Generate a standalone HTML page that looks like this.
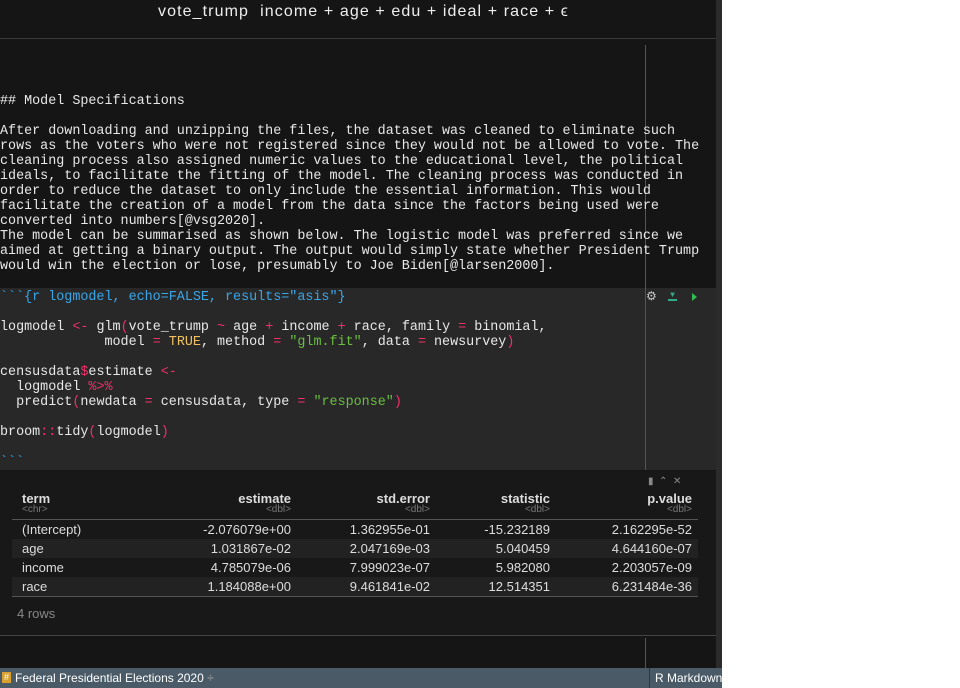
<!DOCTYPE html>
<html><head><style>
body{margin:0;width:960px;height:688px;background:#fff;position:relative;overflow:hidden;font-family:"Liberation Mono",monospace;}
#pane{position:absolute;left:0;top:0;width:716px;height:688px;background:#151515;}
#sb{position:absolute;left:716px;top:0;width:6px;height:668px;background:#2b2b2b;}
.m{position:absolute;left:0;font-size:13.4px;line-height:15px;color:#e8e8e8;white-space:pre;}
#chunk{position:absolute;left:0;top:288px;width:716px;height:182px;background:#282828;}
.vl{position:absolute;left:645px;width:1px;background:#555;}
.p{color:#f0306a}.b{color:#39a6e8}.g{color:#6abf40}.y{color:#f0c060}
#tbl{position:absolute;left:0;top:471px;width:716px;height:164px;background:#181818;font-family:"Liberation Sans",sans-serif;color:#ddd;font-size:13px;}
.c{position:absolute;white-space:nowrap;}
.h{font-weight:bold;}
.s{font-size:10px;color:#777;}
#status{position:absolute;left:0;top:668px;width:722px;height:20px;background:#4a5b67;font-family:"Liberation Sans",sans-serif;font-size:12px;color:#fff;white-space:nowrap;}
</style></head><body>
<div id="pane">
<div style="position:absolute;left:0;top:0;width:716px;height:38px;border-bottom:1px solid #3a3a3a;"></div>
<div style="position:absolute;left:158px;top:3px;font-family:'Liberation Sans',sans-serif;font-size:16px;letter-spacing:1.1px;color:#eee;white-space:pre;">vote_trump  income + age + edu + ideal + race + ϵ</div>
<div class="vl" style="top:45px;height:425px;"></div>
<div class="m" style="top:94px;">## Model Specifications</div>
<div class="m" style="top:124px;">After downloading and unzipping the files, the dataset was cleaned to eliminate such
rows as the voters who were not registered since they would not be allowed to vote. The
cleaning process also assigned numeric values to the educational level, the political
ideals, to facilitate the fitting of the model. The cleaning process was conducted in
order to reduce the dataset to only include the essential information. This would
facilitate the creation of a model from the data since the factors being used were
converted into numbers[@vsg2020].
The model can be summarised as shown below. The logistic model was preferred since we
aimed at getting a binary output. The output would simply state whether President Trump
would win the election or lose, presumably to Joe Biden[@larsen2000].</div>
</div>
<div id="chunk"></div>
<div class="vl" style="top:288px;height:182px;"></div>
<div class="m" style="top:290px;"><span class="b">&#96;&#96;&#96;&#123;r logmodel, echo=FALSE, results="asis"&#125;</span>

logmodel <span class="p">&lt;-</span> glm<span class="p">(</span>vote_trump <span class="p">~</span> age <span class="p">+</span> income <span class="p">+</span> race, family <span class="p">=</span> binomial,
             model <span class="p">=</span> <span class="y">TRUE</span>, method <span class="p">=</span> <span class="g">"glm.fit"</span>, data <span class="p">=</span> newsurvey<span class="p">)</span>

censusdata<span class="p">&#36;</span>estimate <span class="p">&lt;-</span>
  logmodel <span class="p">&#37;&gt;&#37;</span>
  predict<span class="p">(</span>newdata <span class="p">=</span> censusdata, type <span class="p">=</span> <span class="g">"response"</span><span class="p">)</span>

broom<span class="p">::</span>tidy<span class="p">(</span>logmodel<span class="p">)</span>

<span class="b">&#96;&#96;&#96;</span></div>
<div style="position:absolute;left:646px;top:289px;color:#ccc;font-size:12px;font-family:'DejaVu Sans',sans-serif;">⚙</div>
<div style="position:absolute;left:668px;top:292px;width:9px;height:7px;border-bottom:2px solid #3a8;color:#3a8;font-size:8px;line-height:7px;text-align:center;">▼</div>
<div style="position:absolute;left:692px;top:293px;width:0;height:0;border-left:5px solid #3b5;border-top:4px solid transparent;border-bottom:4px solid transparent;"></div>
<div id="tbl">
<div class="c" style="left:648px;top:5px;color:#888;font-size:10px;">▮ &nbsp;⌃ &nbsp;✕</div>
<div class="c h" style="left:22px;top:20px;">term</div>
<div class="c s" style="left:22px;top:33px;">&lt;chr&gt;</div>
<div class="c h" style="right:425px;top:20px;">estimate</div><div class="c s" style="right:425px;top:33px;">&lt;dbl&gt;</div>
<div class="c h" style="right:286px;top:20px;">std.error</div><div class="c s" style="right:286px;top:33px;">&lt;dbl&gt;</div>
<div class="c h" style="right:166px;top:20px;">statistic</div><div class="c s" style="right:166px;top:33px;">&lt;dbl&gt;</div>
<div class="c h" style="right:24px;top:20px;">p.value</div><div class="c s" style="right:24px;top:33px;">&lt;dbl&gt;</div>
<div style="position:absolute;left:12px;top:48px;width:686px;height:1px;background:#555;"></div>
<div style="position:absolute;left:12px;top:68px;width:686px;height:19px;background:#222;"></div>
<div style="position:absolute;left:12px;top:106px;width:686px;height:19px;background:#222;"></div>
<div style="position:absolute;left:12px;top:125px;width:686px;height:1px;background:#555;"></div>
<div class="c" style="left:22px;top:49px;line-height:19px;">(Intercept)<br>age<br>income<br>race</div>
<div class="c" style="right:425px;top:49px;line-height:19px;text-align:right;">-2.076079e+00<br>1.031867e-02<br>4.785079e-06<br>1.184088e+00</div>
<div class="c" style="right:286px;top:49px;line-height:19px;text-align:right;">1.362955e-01<br>2.047169e-03<br>7.999023e-07<br>9.461841e-02</div>
<div class="c" style="right:166px;top:49px;line-height:19px;text-align:right;">-15.232189<br>5.040459<br>5.982080<br>12.514351</div>
<div class="c" style="right:24px;top:49px;line-height:19px;text-align:right;">2.162295e-52<br>4.644160e-07<br>2.203057e-09<br>6.231484e-36</div>
<div class="c" style="left:17px;top:135px;color:#888;">4 rows</div>
</div>
<div style="position:absolute;left:0;top:635px;width:716px;height:1px;background:#444;"></div>
<div class="vl" style="top:638px;height:30px;"></div>
<div id="sb"></div>
<div id="status">
<div style="position:absolute;left:2px;top:4px;width:9px;height:11px;background:#d9a030;color:#fff;font-size:9px;line-height:11px;text-align:center;">#</div>
<div style="position:absolute;left:15px;top:3px;">Federal Presidential Elections 2020 <span style="color:#aaa;">÷</span></div>
<div style="position:absolute;left:649px;top:0;width:1px;height:20px;background:#2a3a44;"></div>
<div style="position:absolute;left:655px;top:3px;">R Markdown</div>
</div>
</body></html>
